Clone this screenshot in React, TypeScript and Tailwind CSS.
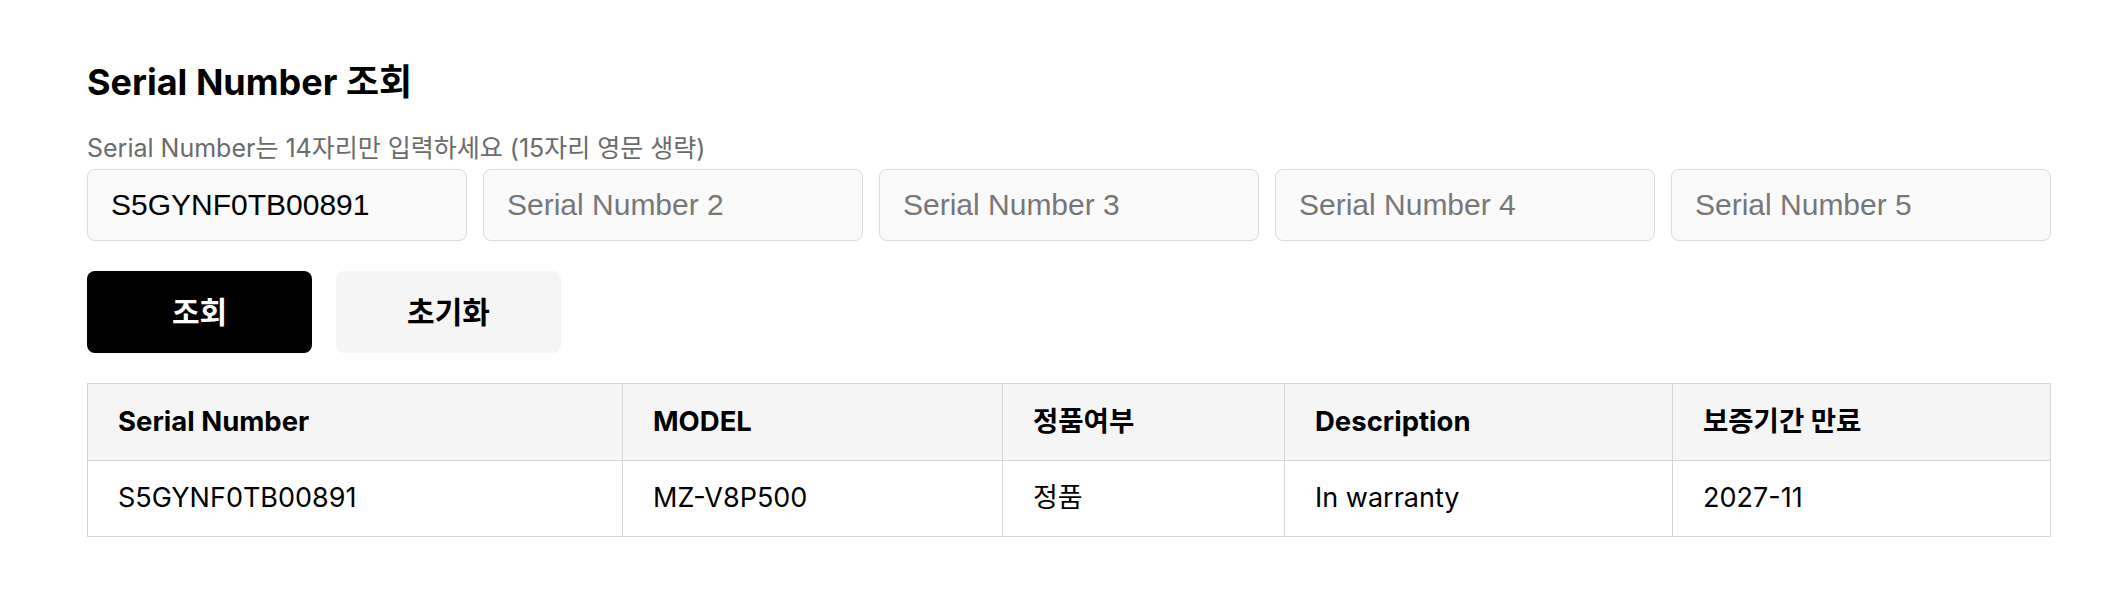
import { useState } from "react";

const columns = [
    { key: "serial", label: "Serial Number", width: "w-[535px]" },
    { key: "model", label: "MODEL", width: "w-[380px]" },
    { key: "genuine", label: "정품여부", width: "w-[282px]" },
    { key: "desc", label: "Description", width: "w-[388px]" },
    { key: "expiry", label: "보증기간 만료", width: "" },
];

const rows = [
    {
        serial: "S5GYNF0TB00891",
        model: "MZ-V8P500",
        genuine: "정품",
        desc: "In warranty",
        expiry: "2027-11",
    },
];

export default function App() {
    const [serials, setSerials] = useState(["S5GYNF0TB00891", "", "", "", ""]);

    return (
        <div className="min-h-screen bg-white font-['Inter','Noto_Sans_CJK_KR',sans-serif] text-black">
            <div className="ml-[87px] w-[1964px] pt-[60px]">
                <h1 className="text-[36px] leading-[44px] font-bold">
                    Serial Number 조회
                </h1>
                <p className="mt-[29px] text-[25px] leading-[30px] text-[#6b6b6b]">
                    Serial Number는 14자리만 입력하세요 (15자리 영문 생략)
                </p>
                <div className="mt-[6px] grid grid-cols-5 gap-4">
                    {serials.map((value, i) => (
                        <input
                            key={i}
                            value={value}
                            onChange={(e) => {
                                const next = [...serials];
                                next[i] = e.target.value;
                                setSerials(next);
                            }}
                            placeholder={`Serial Number ${i + 1}`}
                            className="h-[72px] w-full rounded-lg border border-[#dadada] bg-[#fafafa] px-[23px] font-['Liberation_Sans',Arial,sans-serif] text-[30px] text-black outline-none placeholder:text-[#777777]"
                        />
                    ))}
                </div>
                <div className="mt-[30px] flex gap-6">
                    <button className="h-[82px] w-[225px] rounded-lg bg-black text-[30px] font-bold text-white">
                        조회
                    </button>
                    <button
                        className="h-[82px] w-[225px] rounded-lg bg-[#f5f5f5] text-[30px] font-bold text-black"
                        onClick={() => setSerials(["", "", "", "", ""])}
                    >
                        초기화
                    </button>
                </div>
                <table className="mt-[30px] w-full table-fixed border-collapse border border-[#d6d6d6]">
                    <thead>
                        <tr className="bg-[#f5f5f5]">
                            {columns.map((col) => (
                                <th
                                    key={col.key}
                                    className={`${col.width} h-[77px] border border-[#d6d6d6] px-[30px] text-left text-[27.5px] font-bold`}
                                >
                                    {col.label}
                                </th>
                            ))}
                        </tr>
                    </thead>
                    <tbody>
                        {rows.map((row) => (
                            <tr key={row.serial}>
                                {columns.map((col) => (
                                    <td
                                        key={col.key}
                                        className="h-[76px] border border-[#d6d6d6] px-[30px] text-[27px]"
                                    >
                                        {row[col.key as keyof typeof row]}
                                    </td>
                                ))}
                            </tr>
                        ))}
                    </tbody>
                </table>
            </div>
        </div>
    );
}
